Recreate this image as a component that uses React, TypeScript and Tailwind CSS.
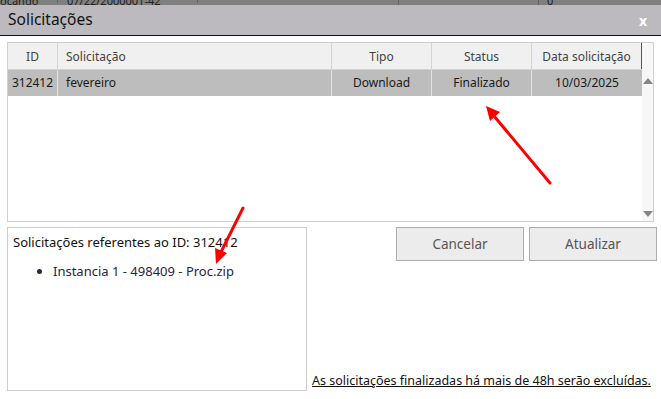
import React from 'react';

const cols = [
  { key: 'id', label: 'ID', w: 'w-[50px]', align: 'text-center' },
  { key: 'sol', label: 'Solicitação', w: 'w-[274px]', align: 'text-left pl-[8px]' },
  { key: 'tipo', label: 'Tipo', w: 'w-[100px]', align: 'text-center' },
  { key: 'status', label: 'Status', w: 'w-[100px]', align: 'text-center' },
  { key: 'data', label: 'Data solicitação', w: 'w-[110px]', align: 'text-center' },
];

const row: Record<string, string> = {
  id: '312412',
  sol: 'fevereiro',
  tipo: 'Download',
  status: 'Finalizado',
  data: '10/03/2025',
};

function Arrows() {
  return (
    <svg className="pointer-events-none absolute left-0 top-0" width="661" height="399">
      <g stroke="#ff0000" strokeWidth="3" strokeLinecap="round">
        <line x1="550" y1="183" x2="494" y2="116" />
        <line x1="243" y1="208" x2="221" y2="252" />
      </g>
      <g fill="#ff0000">
        <polygon points="486,106 500,112 490,121" />
        <polygon points="216,264 215,248 227,253" />
      </g>
    </svg>
  );
}

export default function App() {
  return (
    <div className="relative h-[399px] w-[661px] overflow-hidden bg-white font-['Noto_Sans',sans-serif] text-[12px] text-[#1a1a1a]">
      {/* pedaço da janela de trás */}
      <div className="flex h-[5px] overflow-hidden bg-[#7f7f7f] text-[11px] leading-[5px] text-[#222]">
        <div className="w-[58px] -translate-y-[2px] border-r border-[#666]">ocando</div>
        <div className="w-[140px] -translate-y-[2px] border-r border-[#666] pl-[9px]">07/22/2000001-42</div>
        <div className="w-[201px] border-r border-[#666]" />
        <div className="w-[140px] border-r border-[#666]" />
        <div className="-translate-y-[2px] pl-[8px]">0</div>
      </div>

      <div className="flex h-[31px] items-center justify-between border-b border-[#111] bg-[#bcbabe] pl-[8px] pr-[14px]">
        <span className="text-[15.5px] text-[#111]">Solicitações</span>
        <span className="text-[14px] font-bold text-white">x</span>
      </div>

      <div className="px-[7px] pt-[6px]">
        <div className="flex h-[180px] border border-[#d0d0d0]">
          <div className="w-[634px]">
            <div className="flex h-[27px] border-b border-[#d4d4d4] bg-[#f0f0f0] text-[#444]">
              {cols.map((c, i) => (
                <div
                  key={c.key}
                  className={`${c.w} ${c.align} leading-[27px] ${i < cols.length - 1 ? 'border-r border-[#d4d4d4]' : 'border-r border-[#555]'}`}
                >
                  {c.label}
                </div>
              ))}
            </div>
            <div className="flex h-[26px] bg-[#bdbdbd]">
              {cols.map((c, i) => (
                <div
                  key={c.key}
                  className={`${c.w} ${c.align} leading-[26px] ${i < cols.length - 1 ? 'border-r border-[#e2e2e2]' : ''}`}
                >
                  {row[c.key]}
                </div>
              ))}
            </div>
          </div>
          <div className="flex flex-1 flex-col items-center justify-between bg-[#f7f7f7] pb-[4px] pt-[35px]">
            <div className="h-0 w-0 border-x-[5px] border-b-[6px] border-x-transparent border-b-[#858585]" />
            <div className="h-0 w-0 border-x-[5px] border-t-[6px] border-x-transparent border-t-[#858585]" />
          </div>
        </div>

        <div className="mt-[5px] flex">
          <div className="h-[164px] w-[300px] shrink-0 border border-[#cccccc] px-[5px] pt-[5px] text-[13px]">
            <div className="text-[#111]">Solicitações referentes ao ID: 312412</div>
            <ul className="mt-[9px] list-disc pl-[40px] text-[#2a2340]">
              <li>Instancia 1 - 498409 - Proc.zip</li>
            </ul>
          </div>
          <div className="flex flex-1 flex-col pl-[89px]">
            <div className="flex gap-[5px]">
              <button className="h-[34px] w-[128px] border border-[#adadad] bg-[#ececec] text-[13.5px] text-[#555]">
                Cancelar
              </button>
              <button className="h-[34px] w-[128px] border border-[#adadad] bg-[#ececec] text-[13.5px] text-[#555]">
                Atualizar
              </button>
            </div>
          </div>
        </div>
        <div className="-mt-[19px] pl-[305px] text-[12.5px] text-[#111] underline">
          As solicitações finalizadas há mais de 48h serão excluídas.
        </div>
      </div>

      <Arrows />
    </div>
  );
}
